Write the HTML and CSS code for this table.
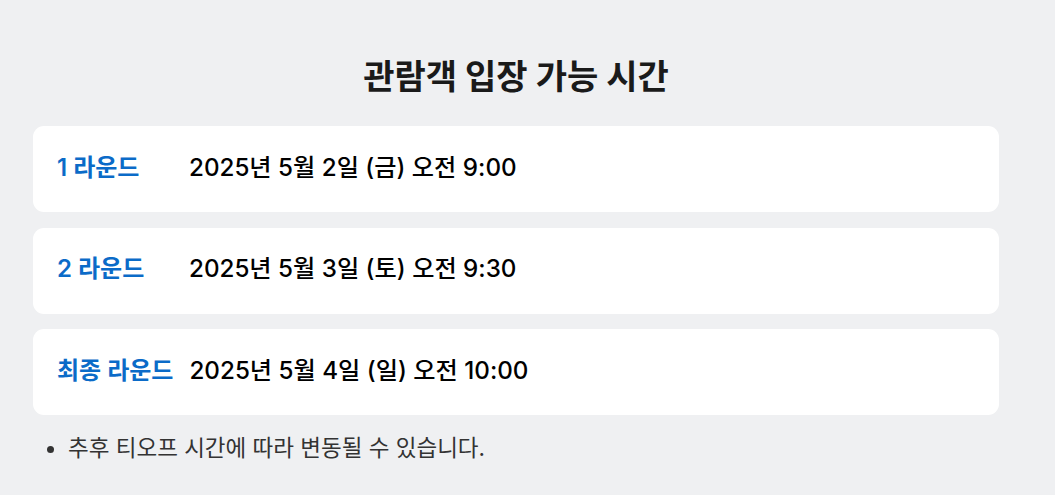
FILE: index.html
```html
<!DOCTYPE html>
<html lang="ko">
<head>
<meta charset="utf-8">
<link rel="stylesheet" href="styles.css">
</head>
<body>
<main class="page">
  <h1 class="title">관람객 입장 가능 시간</h1>
  <div class="rounds">
    <div class="card">
      <span class="label">1 라운드</span>
      <span class="time">2025년 5월 2일 (금) 오전 9:00</span>
    </div>
    <div class="card">
      <span class="label">2 라운드</span>
      <span class="time">2025년 5월 3일 (토) 오전 9:30</span>
    </div>
    <div class="card">
      <span class="label">최종 라운드</span>
      <span class="time">2025년 5월 4일 (일) 오전 10:00</span>
    </div>
  </div>
  <ul class="notes">
    <li>추후 티오프 시간에 따라 변동될 수 있습니다.</li>
  </ul>
</main>
</body>
</html>
```

FILE: styles.css
```css
html, body {
  margin: 0;
  padding: 0;
  background: #eff0f2;
}
body {
  font-family: Inter, "Noto Sans CJK KR", sans-serif;
  color: #111;
}
.page {
  padding: 57px 56px 0 33px;
}
.title {
  margin: 0 0 29px;
  text-align: center;
  font-size: 34px;
  line-height: 40px;
  font-weight: 700;
  color: #1a1a1a;
}
.rounds {
  display: flex;
  flex-direction: column;
  gap: 15.5px;
}
.card {
  display: flex;
  align-items: center;
  gap: 16px;
  height: 86px;
  box-sizing: border-box;
  padding: 0 24px 3px;
  background: #fff;
  border-radius: 11px;
}
.label {
  min-width: 116px;
  font-size: 24px;
  line-height: 30px;
  font-weight: 600;
  color: #0b6bc8;
}
.time {
  font-size: 24.2px;
  line-height: 30px;
  font-weight: 500;
  color: #000;
}
.notes {
  margin: 19px 0 0;
  padding-left: 35px;
  font-size: 22.5px;
  line-height: 28px;
  color: #333;
}
```
